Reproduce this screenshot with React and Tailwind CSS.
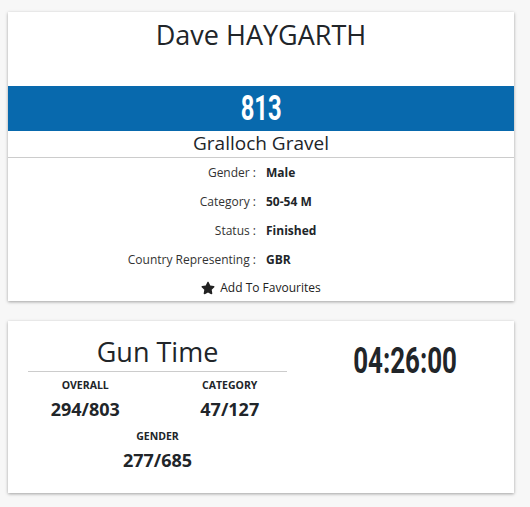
import { FaStar } from 'react-icons/fa';

const details = [
  ['Gender', 'Male'],
  ['Category', '50-54 M'],
  ['Status', 'Finished'],
  ['Country Representing', 'GBR'],
];

const ranks = [
  ['Overall', '294/803'],
  ['Category', '47/127'],
];

function Rank({ label, value }) {
  return (
    <div className="text-center">
      <p className="text-[10.5px] font-bold uppercase leading-[14px]">{label}</p>
      <p className="mt-[5px] text-[18px] font-bold leading-[24px]">{value}</p>
    </div>
  );
}

export default function App() {
  return (
    <main className="min-h-[507px] bg-[#f7f7f7] px-2 pt-3 pb-[14px] font-['Open_Sans','Noto_Sans',sans-serif] text-[#212529]">
      <section className="w-[506px] bg-white shadow-[0_1px_3px_rgba(0,0,0,0.35)]">
        <h1 className="pt-[9px] pb-[37px] text-center text-[27px] leading-[28px]">Dave HAYGARTH</h1>
        <div className="flex h-[45px] items-center justify-center bg-[#0869ad]">
          <span className="inline-block scale-x-[0.68] font-['Roboto',sans-serif] text-[35px] font-bold leading-none text-white">
            813
          </span>
        </div>
        <p className="border-b border-[#cccccc] pt-[1px] pb-[2px] text-center text-[19px] leading-[23px]">Gralloch Gravel</p>
        <div className="text-[12px]">
          {details.map(([label, value]) => (
            <div key={label} className="grid h-[29px] grid-cols-2 items-center">
              <span className="pr-[5px] text-right text-[#333]">{label} :</span>
              <span className="pl-[5px] font-bold">{value}</span>
            </div>
          ))}
          <div className="flex h-[27px] items-center justify-center gap-[5px] text-[#222]">
            <FaStar className="h-[14px] w-[14px]" />
            <span>Add To Favourites</span>
          </div>
        </div>
      </section>

      <section className="mt-5 flex h-[172px] w-[506px] bg-white px-5 shadow-[0_1px_3px_rgba(0,0,0,0.35)]">
        <div className="w-[259px]">
          <h2 className="border-b border-[#cccccc] pt-[14px] pb-[2px] text-center text-[27px] leading-[34px]">Gun Time</h2>
          <div className="-mx-[15px] grid grid-cols-2 pt-[6px]">
            {ranks.map(([label, value]) => (
              <Rank key={label} label={label} value={value} />
            ))}
          </div>
          <div className="mt-[8px]">
            <Rank label="Gender" value="277/685" />
          </div>
        </div>
        <div className="flex-1 pl-[30px] pt-[20px] text-center">
          <span className="inline-block scale-x-[0.7] font-['Roboto',sans-serif] text-[37px] font-bold leading-[40px]">
            04:26:00
          </span>
        </div>
      </section>
    </main>
  );
}
